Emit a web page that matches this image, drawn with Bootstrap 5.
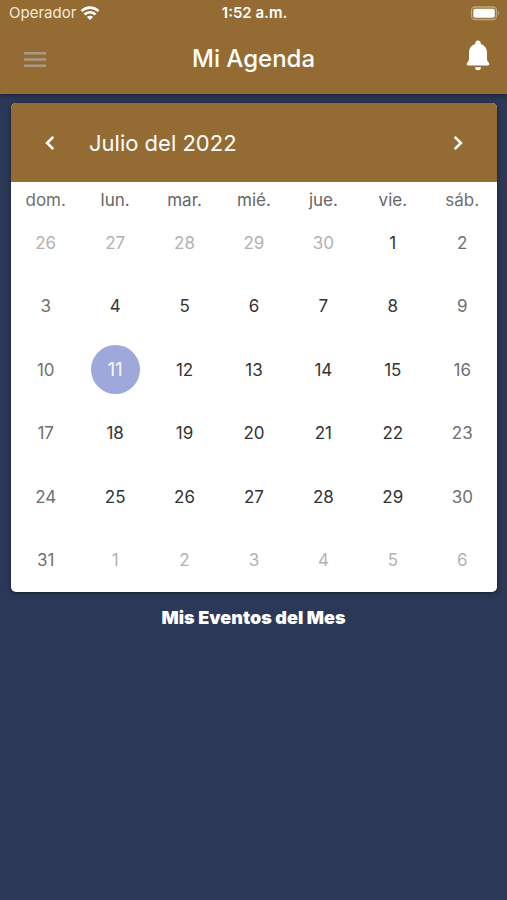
<!DOCTYPE html>
<html lang="es">
<head>
<meta charset="utf-8">
<meta name="viewport" content="width=device-width, initial-scale=1">
<title>Mi Agenda</title>
<link rel="stylesheet" href="https://cdn.jsdelivr.net/npm/bootstrap@5.3.0/dist/css/bootstrap.min.css">
<style>
  body { background: #2c3857; font-family: Inter, "Liberation Sans", sans-serif; color: #fff; }
  .brand-bg { background: #946c33; }
  .top-area { box-shadow: 0 2px 5px rgba(0, 0, 0, .35); }
  .status { height: 26px; padding: 0 7px 0 9px; font-size: 15px; line-height: 26px; }
  .status > *, .title-bar > * { flex: 1 1 0; }
  .carrier { color: #f3e9da; }
  .clock { font-weight: 600; }
  .title-bar { height: 68px; padding: 0 16px 2px; }
  .title-bar h1 { font-size: 24px; line-height: 32px; font-weight: 500; flex: 0 0 auto; }
  .icon-btn { color: #fff; line-height: 0; }
  .calendar { margin: 9px 10px 0 11px; border-radius: 5px; background: #fff; box-shadow: 0 1px 4px rgba(0, 0, 0, .5); }
  .month-bar { height: 79px; padding: 0 26px; }
  .month-bar h2 { font-size: 22px; line-height: 32px; font-weight: 400; padding-left: 26px; }
  .days { table-layout: fixed; height: 410px; font-size: 17px; line-height: 24px; color: #333; }
  .days th { height: 29px; padding: 8px 0 0; line-height: 21px; font-weight: 400; color: #666; }
  .days td { padding: 0; }
  .days td:first-child, .days td:last-child, .days th:first-child, .days th:last-child { color: #707070; }
  .day { width: 49px; height: 49px; padding: 0; border: 0; border-radius: 50%; background: none; color: inherit; }
  .days .other-day { color: #b2b2b2; }
  .day.selected { background: #9fa8da; color: #fafafa; font-size: 19px; }
  .events-title { margin-top: 13px; font-size: 18px; line-height: 26px; font-weight: 900; }
</style>
</head>
<body>
<header class="brand-bg top-area">
  <div class="status d-flex align-items-center">
    <div class="carrier d-flex align-items-center">
      <span>Operador</span>
      <svg class="ms-1" width="20" height="15" viewBox="0 0 20 15" fill="none" stroke="#fff" stroke-width="2.6" aria-hidden="true">
        <path d="M1.5 5.1C6.200.5 13.800.5 18.500 5.100"/><path d="M4.500 8.500c3.100-3.100 7.900-3.100 11 0"/><path d="M6.900 10.900c1.800-1.700 4.400-1.700 6.200 0L10 14z" fill="#fff" stroke="none"/>
      </svg>
    </div>
    <div class="clock text-center">1:52 a.m.</div>
    <div class="d-flex justify-content-end">
      <svg width="30" height="15" viewBox="0 0 30 15" role="img" aria-label="Batería">
        <rect x="1.500" y="1" width="25" height="12.500" rx="3.500" fill="none" stroke="#bda77f" stroke-width="1.300"/>
        <rect x="3.300" y="2.800" width="21.500" height="9" rx="1.800" fill="#fff"/>
        <path d="M28 5.200q2 2 0 4.200z" fill="#bda77f"/>
      </svg>
    </div>
  </div>
  <nav class="title-bar d-flex align-items-center" aria-label="Principal">
    <div>
      <button type="button" class="btn icon-btn p-2 border-0" aria-label="Menú">
        <svg width="22" height="17" viewBox="0 0 22 17" fill="#a79a88"><path d="M0 1h22v2.600H0zM0 7.200h22v2.600H0zM0 13.400h22V16H0z"/></svg>
      </button>
    </div>
    <h1 class="mb-0">Mi Agenda</h1>
    <div class="d-flex justify-content-end">
      <button type="button" class="btn icon-btn p-0 pb-2 border-0" aria-label="Notificaciones">
        <svg width="26" height="31" viewBox="0 0 26 31" fill="#fff"><path d="M13 .5a2.700 2.700 0 0 0-2.700 2.700v.8C6.300 5.200 4 8.500 4 12.800v5.400c0 2-.3 3-1.600 4.300-1.300 1.400-.7 3 .9 3h19.400c1.600 0 2.200-1.600.9-3-1.300-1.300-1.600-2.300-1.600-4.300v-5.400c0-4.300-2.300-7.600-6.300-8.800v-.8A2.700 2.700 0 0 0 13 .5zM10 27.200a3 3 0 0 0 6 0z"/></svg>
      </button>
    </div>
  </nav>
</header>
<main>
  <section class="calendar overflow-hidden">
    <div class="month-bar brand-bg d-flex align-items-center">
      <button type="button" class="btn icon-btn p-1 border-0" aria-label="Mes anterior">
        <svg width="18" height="18" viewBox="0 0 18 18" fill="none" stroke="currentColor" stroke-width="2.600"><path d="M12.300 2.800 6.100 9l6.200 6.200"/></svg>
      </button>
      <h2 class="mb-0 flex-grow-1">Julio del 2022</h2>
      <button type="button" class="btn icon-btn p-1 border-0" aria-label="Mes siguiente">
        <svg width="18" height="18" viewBox="0 0 18 18" fill="none" stroke="currentColor" stroke-width="2.600"><path d="M5.700 2.800 11.900 9l-6.200 6.200"/></svg>
      </button>
    </div>
    <table class="days w-100 text-center align-middle" aria-label="Julio del 2022">
      <thead><tr><th scope="col">dom.</th><th scope="col">lun.</th><th scope="col">mar.</th><th scope="col">mié.</th><th scope="col">jue.</th><th scope="col">vie.</th><th scope="col">sáb.</th></tr></thead>
      <tbody>
        <tr><td><button class="day other-day">26</button></td><td><button class="day other-day">27</button></td><td><button class="day other-day">28</button></td><td><button class="day other-day">29</button></td><td><button class="day other-day">30</button></td><td><button class="day">1</button></td><td><button class="day">2</button></td></tr>
        <tr><td><button class="day">3</button></td><td><button class="day">4</button></td><td><button class="day">5</button></td><td><button class="day">6</button></td><td><button class="day">7</button></td><td><button class="day">8</button></td><td><button class="day">9</button></td></tr>
        <tr><td><button class="day">10</button></td><td><button class="day selected" aria-current="date">11</button></td><td><button class="day">12</button></td><td><button class="day">13</button></td><td><button class="day">14</button></td><td><button class="day">15</button></td><td><button class="day">16</button></td></tr>
        <tr><td><button class="day">17</button></td><td><button class="day">18</button></td><td><button class="day">19</button></td><td><button class="day">20</button></td><td><button class="day">21</button></td><td><button class="day">22</button></td><td><button class="day">23</button></td></tr>
        <tr><td><button class="day">24</button></td><td><button class="day">25</button></td><td><button class="day">26</button></td><td><button class="day">27</button></td><td><button class="day">28</button></td><td><button class="day">29</button></td><td><button class="day">30</button></td></tr>
        <tr><td><button class="day">31</button></td><td><button class="day other-day">1</button></td><td><button class="day other-day">2</button></td><td><button class="day other-day">3</button></td><td><button class="day other-day">4</button></td><td><button class="day other-day">5</button></td><td><button class="day other-day">6</button></td></tr>
      </tbody>
    </table>
  </section>
  <h3 class="events-title text-center mb-0">Mis Eventos del Mes</h3>
</main>
<script src="https://cdn.jsdelivr.net/npm/bootstrap@5.3.0/dist/js/bootstrap.bundle.min.js"></script>
</body>
</html>
